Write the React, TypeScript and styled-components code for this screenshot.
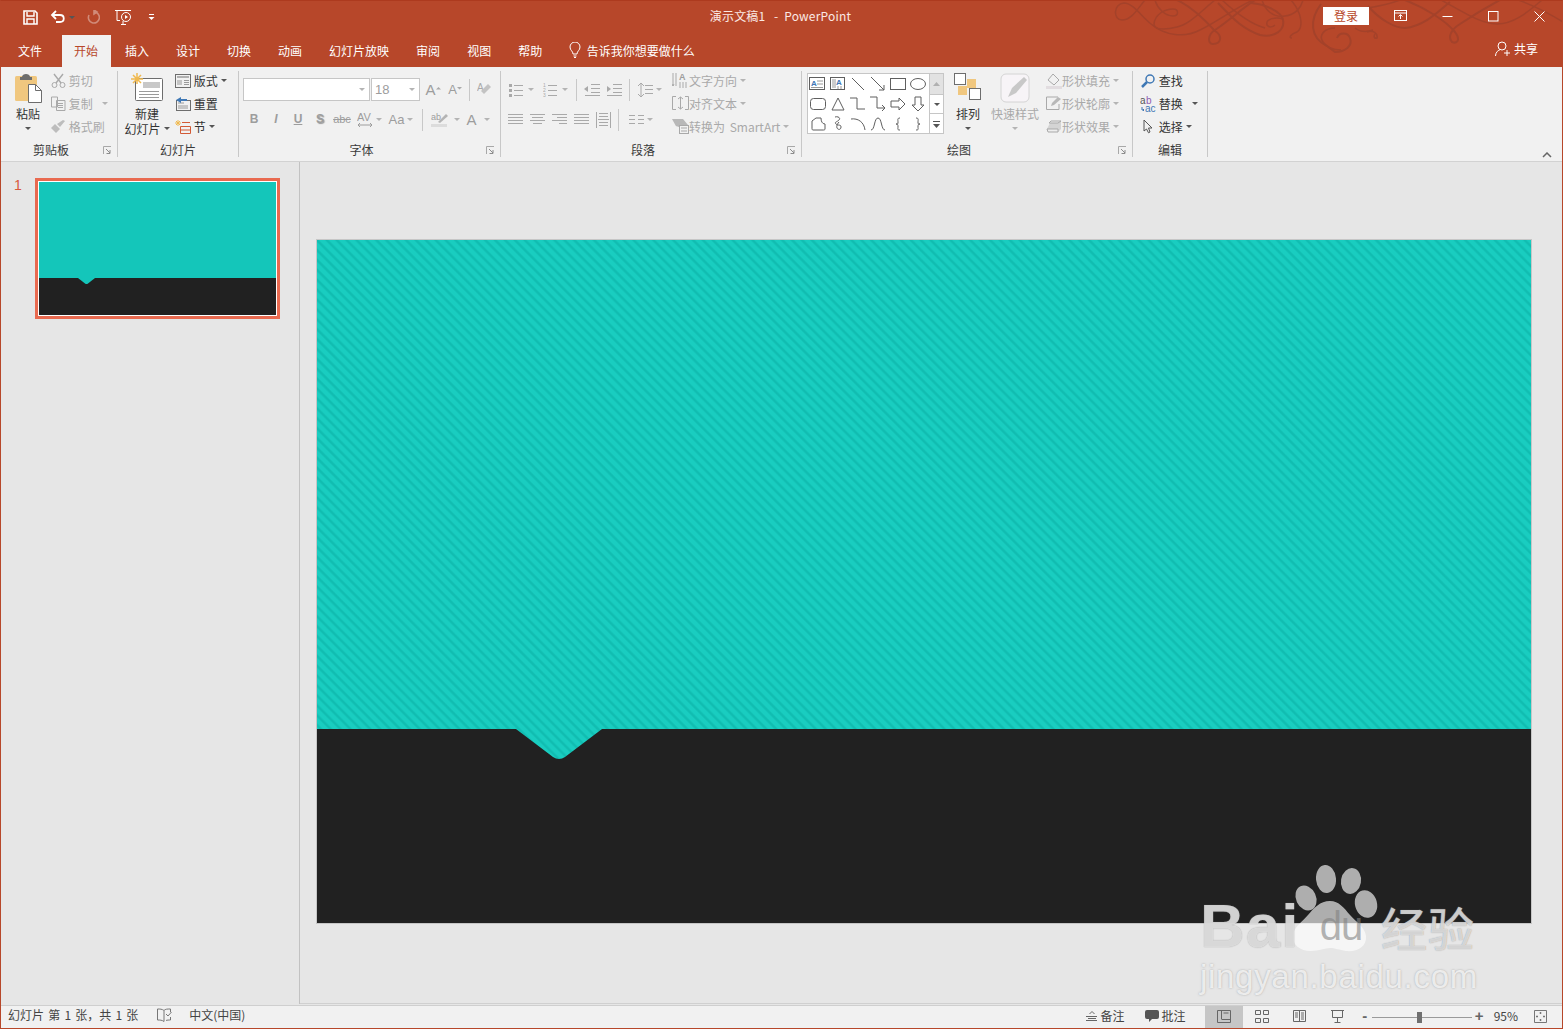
import React from 'react';
import styled, { createGlobalStyle } from 'styled-components';

const RUST = '#b7472a';
const OFF = '#a9a9a9';
const INK = '#5f5f5f';

const Global = createGlobalStyle`
  html, body { margin: 0; padding: 0; overflow: hidden; }
  body { font-family: "Noto Sans CJK SC", "Noto Sans", sans-serif; font-size: 12px; }
  * { box-sizing: border-box; }
`;

const Page = styled.div`
  position: relative;
  width: 1563px;
  height: 1029px;
  display: flex;
  flex-direction: column;
  border: 1px solid ${RUST};
  border-top-color: #ad3a1e;
  background: #e6e6e6;
  overflow: hidden;
`;

/* header */
const Header = styled.header`
  position: relative;
  flex: none;
  height: 66px;
  background: ${RUST};
  color: #fff;
`;
const Swirl = styled.svg`
  position: absolute;
  left: 1104px;
  top: -1px;
  pointer-events: none;
`;
const TitleBar = styled.div`
  position: relative;
  height: 34px;
  padding-bottom: 4px;
  display: grid;
  grid-template-columns: 1fr auto 1fr;
  align-items: center;
`;
const Qat = styled.div`
  display: flex;
  align-items: center;
  padding-left: 14px;
  margin-top: 2px;
`;
const QatCell = styled.div<{ $w: number }>`
  width: ${(p) => p.$w}px;
  display: flex;
  align-items: center;
  justify-content: center;
  gap: 3px;
`;
const Title = styled.div`
  font-size: 12px;
  letter-spacing: 0.2px;
  margin: 0 2px 2px 0;
  color: #fbe9e4;
`;
const WinControls = styled.div`
  display: flex;
  justify-content: flex-end;
  align-items: center;
`;
const Login = styled.div`
  width: 46px;
  height: 18px;
  margin-right: 9px;
  background: #fff;
  color: ${RUST};
  display: flex;
  align-items: center;
  justify-content: center;
  line-height: 18px;
`;
const WinBtn = styled.div`
  width: 46px;
  display: flex;
  justify-content: center;
`;
const Tabs = styled.nav`
  position: relative;
  height: 32px;
  display: flex;
  align-items: stretch;
  padding-left: 3.5px;
`;
const Tab = styled.div<{ $active?: boolean; $file?: boolean }>`
  padding: 0 ${(p) => (p.$active ? 12.5 : 13.5)}px 2px;
  margin: 0 ${(p) => (p.$file ? 5 : p.$active ? 1 : 0)}px 0 ${(p) => (p.$active ? 1 : 0)}px;
  display: flex;
  align-items: center;
  background: ${(p) => (p.$active ? '#f1f1f1' : 'transparent')};
  color: ${(p) => (p.$active ? RUST : '#fff')};
`;
const TellMe = styled.div`
  margin-left: 13px;
  padding-bottom: 2px;
  display: flex;
  align-items: center;
  gap: 6px;
  color: #fff;
`;
const Share = styled.div`
  margin-left: auto;
  margin-right: 24px;
  padding-bottom: 5px;
  display: flex;
  align-items: center;
  gap: 3px;
`;

/* ribbon */
const Ribbon = styled.section`
  flex: none;
  height: 95px;
  display: flex;
  align-items: flex-start;
  padding-top: 3px;
  background: #f1f1f1;
  border-bottom: 1px solid #d2d2d2;
  color: #333;
`;
const Group = styled.div<{ $w: number }>`
  width: ${(p) => p.$w}px;
  height: 88px;
  flex: none;
  display: flex;
  flex-direction: column;
`;
const GroupBody = styled.div<{ $pad?: number }>`
  height: 72px;
  display: flex;
  align-items: flex-start;
  padding-left: ${(p) => p.$pad ?? 0}px;
`;
const GroupFoot = styled.div`
  height: 16px;
  display: flex;
  align-items: center;
`;
const GroupLabel = styled.div`
  flex: 1;
  text-align: center;
  line-height: 16px;
  color: #3a3a3a;
`;
const LauncherSlot = styled.div`
  width: 16px;
  padding-right: 3px;
  display: flex;
  justify-content: center;
`;
const Divider = styled.div`
  width: 1px;
  height: 86px;
  flex: none;
  margin-top: 1px;
  background: #c8c8c8;
`;
const Collapse = styled.div`
  margin-left: auto;
  margin-right: 10px;
  align-self: flex-end;
  padding-bottom: 3px;
`;
const LargeBtn = styled.div<{ $w: number; $ml?: number; $off?: boolean }>`
  width: ${(p) => p.$w}px;
  margin-left: ${(p) => p.$ml ?? 0}px;
  flex: none;
  display: flex;
  flex-direction: column;
  align-items: center;
  padding-top: 3px;
  line-height: 15px;
  white-space: nowrap;
  color: ${(p) => (p.$off ? OFF : '#333')};
`;
const LargeIcon = styled.div`
  height: 32px;
  margin-bottom: 1px;
  display: flex;
  align-items: flex-start;
  justify-content: center;
`;
const LineWithCaret = styled.div`
  height: 15px;
  display: flex;
  align-items: center;
  justify-content: center;
`;
const Col = styled.div<{ $ml?: number }>`
  flex: none;
  margin: -1px 0 0 ${(p) => p.$ml ?? 0}px;
  display: flex;
  flex-direction: column;
`;
const SmallBtn = styled.div<{ $off?: boolean }>`
  height: 23px;
  display: flex;
  align-items: center;
  white-space: nowrap;
  color: ${(p) => (p.$off ? OFF : '#333')};
`;
const WideLabel = styled.span`
  word-spacing: 2px;
`;
const IconSlot = styled.div<{ $w: number }>`
  width: ${(p) => p.$w}px;
  flex: none;
  display: flex;
  justify-content: center;
  align-items: center;
`;
const Caret = styled.i<{ $ml?: number; $off?: boolean }>`
  display: block;
  flex: none;
  width: 0;
  height: 0;
  margin-left: ${(p) => p.$ml ?? 3}px;
  border-left: 3px solid transparent;
  border-right: 3px solid transparent;
  border-top: 3px solid ${(p) => (p.$off ? '#b4b4b4' : '#555')};
`;
const Rows = styled.div`
  flex: none;
  display: flex;
  flex-direction: column;
  gap: 7px;
  padding-top: 8px;
`;
const Row = styled.div`
  height: 23px;
  display: flex;
  align-items: center;
`;
const Cell = styled.div<{ $w: number; $ml?: number }>`
  width: ${(p) => p.$w}px;
  margin-left: ${(p) => p.$ml ?? 0}px;
  flex: none;
  height: 23px;
  display: flex;
  align-items: center;
  justify-content: center;
`;
const Combo = styled.div<{ $w: number }>`
  width: ${(p) => p.$w}px;
  height: 23px;
  flex: none;
  margin-right: 1px;
  padding: 0 4px 0 3px;
  display: flex;
  align-items: center;
  justify-content: space-between;
  background: #fff;
  border: 1px solid #c6c6c6;
  color: #a6a6a6;
`;
const FontGlyph = styled.span<{ $bold?: boolean; $italic?: boolean; $under?: boolean; $size?: number; $shadow?: boolean }>`
  font-family: "Liberation Sans", Arial, sans-serif;
  font-size: ${(p) => p.$size ?? 12}px;
  font-weight: ${(p) => (p.$bold ? 700 : 400)};
  font-style: ${(p) => (p.$italic ? 'italic' : 'normal')};
  text-decoration: ${(p) => (p.$under ? 'underline' : 'none')};
  text-shadow: ${(p) => (p.$shadow ? '1px 1px 1px #999' : 'none')};
  color: #9d9d9d;
  line-height: 1.2;
`;
const Strike = styled(FontGlyph)`
  text-decoration: line-through;
`;
const VRule = styled.div<{ $ml: number; $mr: number }>`
  width: 1px;
  height: 22px;
  flex: none;
  margin: 0 ${(p) => p.$mr}px 0 ${(p) => p.$ml}px;
  background: #c8c8c8;
`;
const Gallery = styled.div`
  width: 137px;
  height: 61px;
  flex: none;
  margin: 3px 0 0 5px;
  display: flex;
  background: #fff;
  border: 1px solid #c6c6c6;
`;
const GalleryGrid = styled.div`
  width: 121px;
  display: grid;
  grid-template-columns: repeat(6, 20px);
  grid-auto-rows: 20px;
  align-items: center;
  justify-items: center;
  align-content: center;
`;
const GalleryScroll = styled.div`
  flex: 1;
  display: flex;
  flex-direction: column;
  border-left: 1px solid #c6c6c6;
`;
const ScrollBtn = styled.div<{ $h: number; $dim?: boolean }>`
  height: ${(p) => p.$h}px;
  display: flex;
  align-items: center;
  justify-content: center;
  background: ${(p) => (p.$dim ? '#e2e2e2' : '#fff')};
  border-bottom: 1px solid #c6c6c6;
  &:last-child { border-bottom: 0; }
`;

/* workspace */
const Main = styled.main`
  flex: 1;
  min-height: 0;
  display: flex;
`;
const ThumbPane = styled.aside`
  width: 299px;
  flex: none;
  display: flex;
  align-items: flex-start;
  padding: 16px 0 0 13px;
  border-right: 1px solid #c2c2c2;
`;
const ThumbNo = styled.div`
  width: 21px;
  font-family: "Liberation Sans", Arial, sans-serif;
  font-size: 14px;
  line-height: 14px;
  color: #d9583a;
`;
const ThumbFrame = styled.div`
  width: 245px;
  height: 141px;
  border: 3px solid #e96a50;
  outline: 1px solid #fff;
  outline-offset: -4px;
  padding: 1px;
`;
const Workspace = styled.div`
  flex: 1;
  padding: 78px 0 0 17px;
  border-bottom: 1px solid #d0d0d0;
`;
const Slide = styled.div<{ $w: number; $h: number }>`
  width: ${(p) => p.$w}px;
  height: ${(p) => p.$h}px;
  background: #212121;
`;
const SlideFrame = styled(Slide)`
  box-shadow: 0 0 0 1px #c6c6c6;
`;
const Fill = styled.div<{ $h: number; $clip: string; $stripes?: boolean }>`
  height: ${(p) => p.$h}px;
  clip-path: path("${(p) => p.$clip}");
  background: ${(p) =>
    p.$stripes
      ? 'repeating-linear-gradient(45deg, #19cdc0 0, #19cdc0 3px, #11bdb1 4.5px, #11bdb1 5.5px, #19cdc0 7px)'
      : '#14c6ba'};
`;

/* status bar */
const Status = styled.footer`
  flex: none;
  height: 23px;
  margin-top: 1px;
  display: flex;
  align-items: center;
  background: #f1f1f1;
  border-top: 1px solid #cfcfcf;
  color: #444;
  line-height: 20px;
`;
const StatusLeft = styled.div`
  display: flex;
  align-items: center;
  padding: 0 0 2px 7px;
`;
const StatusRight = styled.div`
  margin-left: auto;
  display: flex;
  align-items: center;
  height: 100%;
`;
const StatusItem = styled.div<{ $ml?: number }>`
  margin-left: ${(p) => p.$ml ?? 0}px;
  padding-bottom: 2px;
  display: flex;
  align-items: center;
  gap: 3px;
  white-space: nowrap;
  word-spacing: 1.5px;
`;
const ViewBtn = styled.div<{ $active?: boolean; $w: number; $ml?: number }>`
  width: ${(p) => p.$w}px;
  margin-left: ${(p) => p.$ml ?? 0}px;
  height: 100%;
  padding-bottom: 1px;
  display: flex;
  align-items: center;
  justify-content: center;
  background: ${(p) => (p.$active ? '#c6c6c6' : 'transparent')};
`;
const ZoomTrack = styled.div`
  position: relative;
  width: 100px;
  height: 1px;
  margin: 0 3px;
  background: #9a9a9a;
`;
const ZoomThumb = styled.div`
  position: absolute;
  left: 45px;
  top: -5px;
  width: 5px;
  height: 11px;
  background: #707070;
`;
const ZoomSign = styled.div<{ $ml?: number }>`
  width: 8px;
  margin-left: ${(p) => p.$ml ?? 0}px;
  padding-bottom: 2px;
  font-family: "Liberation Sans", Arial, sans-serif;
  font-size: 15px;
  font-weight: 700;
  color: #666;
  text-align: center;
`;

/* watermark over the page */
const Watermark = styled.div`
  position: absolute;
  left: 1199px;
  top: 861px;
  width: 285px;
  height: 132px;
  padding-top: 36px;
  pointer-events: none;
`;
const Paw = styled.svg`
  position: absolute;
  left: 0;
  top: 0;
`;
const WmRow = styled.div`
  position: relative;
  display: flex;
  align-items: center;
  height: 56px;
`;
const WmBai = styled.div`
  width: 101px;
  font-family: "Liberation Sans", Arial, sans-serif;
  font-weight: 700;
  font-size: 62px;
  letter-spacing: 1px;
  line-height: 56px;
  color: rgba(255, 255, 255, 0.66);
  text-shadow: 0 0 1px rgba(130, 130, 130, 0.9);
`;
const WmDu = styled.div`
  width: 80px;
  text-align: center;
  font-family: "Liberation Sans", Arial, sans-serif;
  font-size: 40px;
  line-height: 52px;
  letter-spacing: -1px;
  color: rgba(130, 130, 130, 0.6);
`;
const WmCn = styled.div`
  font-weight: 500;
  font-size: 46px;
  letter-spacing: 1px;
  line-height: 56px;
  color: rgba(255, 255, 255, 0.64);
  text-shadow: 0 0 1px rgba(130, 130, 130, 0.9);
`;
const WmUrl = styled.div`
  margin-top: 6px;
  font-family: "Liberation Sans", Arial, sans-serif;
  font-size: 33px;
  letter-spacing: 0.7px;
  line-height: 34px;
  color: rgba(255, 255, 255, 0.75);
  text-shadow: 0 0 2px rgba(150, 150, 150, 0.8);
  white-space: nowrap;
`;

type IP = { w?: number; h?: number; children: React.ReactNode };
const Ico = ({ w = 16, h = 16, children }: IP) => (
  <svg width={w} height={h} viewBox={`0 0 ${w} ${h}`} fill="none" style={{ display: 'block', flex: 'none' }}>
    {children}
  </svg>
);
const Launcher = () => (
  <Ico w={9} h={9}>
    <path d="M.5 8V.5H8" stroke="#a8a8a8" />
    <path d="M3 3l4 4M7 4v3.5H3.5" stroke="#8c8c8c" />
  </Ico>
);
const Lines = ({ x, ys, w, c = OFF }: { x: number; ys: number[]; w: number; c?: string }) => (
  <>
    {ys.map((y) => (
      <path key={y} d={`M${x} ${y}.5h${w}`} stroke={c} />
    ))}
  </>
);

const tabs = ['插入', '设计', '切换', '动画', '幻灯片放映', '审阅', '视图', '帮助'];

const shapes: React.ReactNode[] = [
  <Ico w={18} h={14}><rect x=".5" y=".5" width="15" height="12" stroke={INK} /><text x="2" y="9" fontSize="8" fontWeight="700" fill="#3f78b5" fontFamily="Liberation Sans">A</text><path d="M8 4h6M8 7h6M2 10.5h12" stroke="#999" /></Ico>,
  <Ico w={16} h={14}><rect x=".5" y=".5" width="14" height="12" stroke={INK} /><text x="6" y="8" fontSize="8" fontWeight="700" fill="#3f78b5" fontFamily="Liberation Sans">A</text><path d="M3 2v9M5 2v9M8 9v3M11 9v3" stroke="#999" /></Ico>,
  <Ico w={14} h={14}><path d="M1 1l12 12" stroke={INK} /></Ico>,
  <Ico w={16} h={16}><path d="M1 1l13 13M14 9v5H9" stroke={INK} /></Ico>,
  <Ico w={16} h={12}><rect x=".5" y=".5" width="15" height="11" stroke={INK} /></Ico>,
  <Ico w={16} h={12}><ellipse cx="8" cy="6" rx="7.5" ry="5.5" stroke={INK} /></Ico>,
  <Ico w={16} h={12}><rect x=".5" y=".5" width="15" height="11" rx="3" stroke={INK} /></Ico>,
  <Ico w={14} h={14}><path d="M7 1l6 12H1z" stroke={INK} /></Ico>,
  <Ico w={16} h={13}><path d="M0 1h7v11h8" stroke={INK} /></Ico>,
  <Ico w={16} h={15}><path d="M0 1h7v11h8M12 9l3 3-3 3" stroke={INK} /></Ico>,
  <Ico w={16} h={14}><path d="M1 4h8V1l6 6-6 6v-3H1z" stroke={INK} /></Ico>,
  <Ico w={14} h={16}><path d="M4 1h6v8h3l-6 6-6-6h3z" stroke={INK} /></Ico>,
  <Ico w={15} h={14}><path d="M1 4l4-3h5c0 3 1 6 4 6v5c0 1-1 1-2 1H2C1 13 1 12 1 11z" stroke={INK} /></Ico>,
  <Ico w={10} h={15}><path d="M2 1c3-1 6 1 4 3S1 6 3 8s5 0 5 3-3 3-4 1 1-5 2-6" stroke={INK} /></Ico>,
  <Ico w={16} h={14}><path d="M1 2c7-1 13 3 14 11" stroke={INK} /></Ico>,
  <Ico w={16} h={14}><path d="M1 13c4 0 3-12 7-12s3 12 7 12" stroke={INK} /></Ico>,
  <Ico w={8} h={14}><path d="M6 1C3 1 4 3 4 5S4 7 2 7c2 0 2 1 2 3s-1 3 2 3" stroke={INK} /></Ico>,
  <Ico w={8} h={14}><path d="M2 1c3 0 2 2 2 4s0 2 2 2c-2 0-2 1-2 3s1 3-2 3" stroke={INK} /></Ico>,
];

const tealTop = 'M0 0H1214V489H285L248 517Q242 521 236 517L199 489H0Z';
const tealThumb = 'M0 0H237V96H56L49 101.5Q47.5 102.5 46 101.5L39 96H0Z';

export default function App() {
  return (
    <Page>
      <Global />
      <Header>
        <Swirl width="458" height="67" viewBox="0 0 458 67" fill="none" stroke="#a4422a" strokeWidth="1.5">
          <path d="M40 0C33 8 27 20 17 20 8 20 8 4 19 3 28 3 36 16 46 24 60 36 80 38 95 30 112 22 130 8 148 0" />
          <path d="M50 0c2 8 10 16 18 16 6 0 6-7 0-7C60 9 50 14 49 24c0 6 11 6 23 3C85 24 95 12 110 0" />
          <path strokeWidth="2" d="M72 0c13 6 28 20 38 31 8 5 6 13-2 13-6 0-5-10 2-14C125 20 135 10 150 0" />
          <path strokeWidth="2" d="M113 3c12 12 22 25 42 32 15 3 25-5 23-15-1-8-18-16-32-17" />
          <path d="M178 19c-6-2-18-1-16 6 2 3 6 2 8 0M117 0c13 12 28 24 43 28" />
          <path d="M157 0c3 10 11 18 23 16 10-1 16-8 18-16M186 0c12 14 12 28 6 32-6 2-9 6-5 6" />
          <path strokeWidth="2" d="M216 4c-12 16-11 34 6 42l8 6c10 0 18-6 15-14-2-6-11-6-13 0" />
          <path d="M230 28c-10 0-17 7-12 14 4 6 12 8 18 8" />
          <path strokeWidth="2" d="M263 6c12 14 27 22 37 22 20-2 35-18 45-26" />
          <path strokeWidth="2" d="M300 0c20 8 40 20 50 32 6 8 2 12-3 10-4-4-2-12 8-18 15-10 25-16 40-24" />
          <path d="M336 0c19 10 39 24 56 24 18 0 33-14 45-24M262 32c6-2 11 1 10 6-2 1-4-1-2-4M250 28c5 4 12 4 18 2M263 8c12-2 27-6 32-8M413 0c17 6 32 14 45 22" />
        </Swirl>
        <TitleBar>
          <Qat>
            <QatCell $w={30}>
              <Ico w={15} h={15}>
                <path d="M1 1h11l2 2v11H1z" stroke="#fff" strokeWidth="1.6" />
                <path d="M4 2v4h7V2M4 14V9h7v5" stroke="#fff" strokeWidth="1.4" />
              </Ico>
            </QatCell>
            <QatCell $w={34}>
              <Ico w={16} h={14}>
                <path d="M6 1L2 5l4 4M2 5h8c5 0 5 7 0 7H6" stroke="#fff" strokeWidth="1.8" />
              </Ico>
              <Caret $ml={0} />
            </QatCell>
            <QatCell $w={28}>
              <Ico w={14} h={14}>
                <path d="M8 2a5.5 5.5 0 1 1-5 3M8 0v4l3-2z" stroke="#d18b79" strokeWidth="1.6" />
              </Ico>
            </QatCell>
            <QatCell $w={32}>
              <Ico w={17} h={17}>
                <path d="M0 1.5h16M2 1.5v10h3M6 15.5h5M8 12v3" stroke="#fff" />
                <circle cx="11" cy="8" r="4.5" stroke="#fff" />
                <path d="M10 6l3 2-3 2z" fill="#fff" />
              </Ico>
            </QatCell>
            <QatCell $w={24}>
              <Ico w={7} h={8}>
                <path d="M1 1.5h5" stroke="#fff" />
                <path d="M.5 4h6L3.5 7z" fill="#fff" />
              </Ico>
            </QatCell>
          </Qat>
          <Title>演示文稿1&nbsp;&nbsp; -&nbsp; PowerPoint</Title>
          <WinControls>
            <Login>登录</Login>
            <WinBtn>
              <Ico w={14} h={12}>
                <rect x=".5" y=".5" width="12" height="10" stroke="#fff" />
                <path d="M1 3h11M6.5 9V5M4.5 6.5l2-2 2 2" stroke="#fff" />
              </Ico>
            </WinBtn>
            <WinBtn>
              <Ico w={11} h={3}>
                <path d="M.5 1.5h10" stroke="#fff" />
              </Ico>
            </WinBtn>
            <WinBtn>
              <Ico w={11} h={11}>
                <rect x=".5" y=".5" width="9.5" height="9.5" stroke="#fff" />
              </Ico>
            </WinBtn>
            <WinBtn>
              <Ico w={11} h={11}>
                <path d="M.5.5l10 10M10.5.5l-10 10" stroke="#fff" />
              </Ico>
            </WinBtn>
          </WinControls>
        </TitleBar>
        <Tabs>
          <Tab $file>文件</Tab>
          <Tab $active>开始</Tab>
          {tabs.map((t) => (
            <Tab key={t}>{t}</Tab>
          ))}
          <TellMe>
            <Ico w={12} h={16}>
              <path d="M4 12c0-3-3-3.500-3-7a5 5 0 0 1 10 0c0 3.500-3 4-3 7zM4.500 14h3M5 15.500h2" stroke="#fff" />
            </Ico>
            告诉我你想要做什么
          </TellMe>
          <Share>
            <Ico w={16} h={16}>
              <circle cx="7" cy="5" r="4" stroke="#fff" />
              <path d="M.5 15c0-4 3-6 5-6.500M12 9v6M9 12h6" stroke="#fff" />
            </Ico>
            共享
          </Share>
        </Tabs>
      </Header>

      <Ribbon>
        <Group $w={116}>
          <GroupBody $pad={12}>
            <LargeBtn $w={30}>
              <LargeIcon>
                <Ico w={30} h={32}>
                  <rect x="2" y="3" width="22" height="25" rx="1.500" fill="#f0c77f" />
                  <path d="M9 4c0-4 8-4 8 0h2v3H7V4z" fill="#6d6d6d" />
                  <path d="M15.500 11.500h7l6 6v12h-13z" fill="#fff" stroke="#6d6d6d" />
                  <path d="M22.500 11.500v6h6" stroke="#6d6d6d" />
                </Ico>
              </LargeIcon>
              <span>粘贴</span>
              <LineWithCaret>
                <Caret $ml={0} />
              </LineWithCaret>
            </LargeBtn>
            <Col $ml={7}>
              <SmallBtn $off>
                <IconSlot $w={16}>
                  <Ico w={15} h={15}>
                    <path d="M3 1l7 9M12 1L5 10" stroke={OFF} strokeWidth="1.400" />
                    <circle cx="3.500" cy="12" r="2.500" stroke={OFF} />
                    <circle cx="11.500" cy="12" r="2.500" stroke={OFF} />
                  </Ico>
                </IconSlot>
                <span>&nbsp;剪切</span>
              </SmallBtn>
              <SmallBtn $off>
                <IconSlot $w={16}>
                  <Ico w={15} h={15}>
                    <path d="M.5 1h6v10h-6zM5.500 4.500h8.500v10H5.500z" stroke={OFF} fill="#f1f1f1" />
                    <Lines x={7} ys={[7, 9, 11]} w={5} />
                  </Ico>
                </IconSlot>
                <span>&nbsp;复制</span>
                <Caret $ml={9} $off />
              </SmallBtn>
              <SmallBtn $off>
                <IconSlot $w={16}>
                  <Ico w={15} h={13}>
                    <path d="M0 8l5 5 4-4-5-5z" fill="#bdbdbd" />
                    <path d="M6 4l3 3 5-6-2-1z" fill="#bdbdbd" />
                  </Ico>
                </IconSlot>
                <span>&nbsp;格式刷</span>
              </SmallBtn>
            </Col>
          </GroupBody>
          <GroupFoot>
            <GroupLabel>剪贴板</GroupLabel>
            <LauncherSlot>
              <Launcher />
            </LauncherSlot>
          </GroupFoot>
        </Group>
        <Divider />

        <Group $w={120}>
          <GroupBody $pad={6}>
            <LargeBtn $w={46}>
              <LargeIcon>
                <Ico w={32} h={30}>
                  <rect x="4.500" y="5.500" width="27" height="22" rx="1" fill="#fff" stroke="#6d6d6d" />
                  <rect x="12" y="9" width="17" height="6" fill="#c8c8c8" />
                  <Lines x={8} ys={[18, 21, 24]} w={20} c="#9a9a9a" />
                  <path d="M6 0v11M0 6h12M2 2l8 8M10 2l-8 8" stroke="#f0b94f" strokeWidth="1.500" />
                </Ico>
              </LargeIcon>
              <span>新建</span>
              <LineWithCaret>
                幻灯片
                <Caret $ml={3} />
              </LineWithCaret>
            </LargeBtn>
            <Col $ml={5}>
              <SmallBtn>
                <IconSlot $w={16}>
                  <Ico w={16} h={14}>
                    <rect x=".5" y=".5" width="15" height="13" stroke="#6d6d6d" />
                    <path d="M2 3h12" stroke="#b0b0b0" strokeWidth="2" />
                    <path d="M2 6h5v5H2z" fill="#c4c4c4" />
                    <Lines x={9} ys={[6, 8, 10]} w={5} c="#9a9a9a" />
                  </Ico>
                </IconSlot>
                <span>&nbsp;版式</span>
                <Caret />
              </SmallBtn>
              <SmallBtn>
                <IconSlot $w={16}>
                  <Ico w={16} h={14}>
                    <rect x="1.500" y="3.500" width="14" height="10" stroke="#6d6d6d" />
                    <path d="M3 6h6M3 9h10M3 11h10" stroke="#9a9a9a" />
                    <path d="M6 0L1 3l5 3V4h6V2H6z" fill="#3f78b5" />
                  </Ico>
                </IconSlot>
                <span>&nbsp;重置</span>
              </SmallBtn>
              <SmallBtn>
                <IconSlot $w={16}>
                  <Ico w={16} h={14}>
                    <path d="M3 0v6M0 3h6M1 1l4 4M5 1L1 5" stroke="#f0b94f" />
                    <path d="M7 2.500h8M5.500 6.500h10v7h-10zM5.500 10h10" stroke="#d35a35" />
                  </Ico>
                </IconSlot>
                <span>&nbsp;节</span>
                <Caret />
              </SmallBtn>
            </Col>
          </GroupBody>
          <GroupFoot>
            <GroupLabel>幻灯片</GroupLabel>
          </GroupFoot>
        </Group>
        <Divider />

        <Group $w={261}>
          <GroupBody $pad={4}>
            <Rows>
              <Row>
                <Combo $w={127}>
                  <span />
                  <Caret $ml={0} $off />
                </Combo>
                <Combo $w={49}>
                  <FontGlyph $size={13}>18</FontGlyph>
                  <Caret $ml={0} $off />
                </Combo>
                <Cell $w={24}>
                  <FontGlyph $size={15}>A</FontGlyph>
                  <Ico w={5} h={8}>
                    <path d="M0 3.500h5L2.500 1z" fill={OFF} />
                  </Ico>
                </Cell>
                <Cell $w={20}>
                  <FontGlyph $size={13}>A</FontGlyph>
                  <Ico w={5} h={8}>
                    <path d="M0 1h5L2.500 3.500z" fill={OFF} />
                  </Ico>
                </Cell>
                <VRule $ml={4} $mr={5} />
                <Cell $w={20}>
                  <Ico w={16} h={15}>
                    <text x="0" y="9" fontSize="10" fill={OFF} fontFamily="Liberation Sans">A</text>
                    <path d="M7 12l7-7-3-3-7 7z" fill="#c3c3c3" />
                  </Ico>
                </Cell>
              </Row>
              <Row>
                <Cell $w={22}>
                  <FontGlyph $bold>B</FontGlyph>
                </Cell>
                <Cell $w={22}>
                  <FontGlyph $italic $bold>
                    I
                  </FontGlyph>
                </Cell>
                <Cell $w={22}>
                  <FontGlyph $under $bold>
                    U
                  </FontGlyph>
                </Cell>
                <Cell $w={22}>
                  <FontGlyph $bold $shadow>
                    S
                  </FontGlyph>
                </Cell>
                <Cell $w={22}>
                  <Strike $size={11}>abc</Strike>
                </Cell>
                <Cell $w={32}>
                  <Ico w={16} h={16}>
                    <text x="0" y="9" fontSize="11" fill="#9d9d9d" fontFamily="Liberation Sans">AV</text>
                    <path d="M1 13h14M3 11l-2 2 2 2M13 11l2 2-2 2" stroke="#9d9d9d" />
                  </Ico>
                  <Caret $off />
                </Cell>
                <Cell $w={32}>
                  <FontGlyph $size={13}>Aa</FontGlyph>
                  <Caret $off />
                </Cell>
                <VRule $ml={5} $mr={5} />
                <Cell $w={34}>
                  <Ico w={18} h={16}>
                    <text x="0" y="8" fontSize="9" fill="#9d9d9d" fontFamily="Liberation Sans">ab</text>
                    <path d="M7 10l8-8 2 2-8 7z" fill="#b4b4b4" />
                    <path d="M0 13.500h16" stroke="#dcdcdc" strokeWidth="3" />
                  </Ico>
                  <Caret $ml={5} $off />
                </Cell>
                <Cell $w={32}>
                  <FontGlyph $size={15}>A</FontGlyph>
                  <Caret $ml={7} $off />
                </Cell>
              </Row>
            </Rows>
          </GroupBody>
          <GroupFoot>
            <GroupLabel>字体</GroupLabel>
            <LauncherSlot>
              <Launcher />
            </LauncherSlot>
          </GroupFoot>
        </Group>
        <Divider />

        <Group $w={300}>
          <GroupBody $pad={3}>
            <Rows>
              <Row>
                <Cell $w={34}>
                  <Ico w={14} h={14}>
                    <path d="M5 2.500h9M5 7.500h9M5 12.500h9" stroke={OFF} />
                    <path d="M0 1h3v3H0zM0 6h3v3H0zM0 11h3v3H0z" fill={OFF} />
                  </Ico>
                  <Caret $ml={5} $off />
                </Cell>
                <Cell $w={34}>
                  <Ico w={14} h={16}>
                    <path d="M5 3.500h9M5 8.500h9M5 13.500h9" stroke={OFF} />
                    <text x="0" y="5" fontSize="5" fill={OFF} fontFamily="Liberation Sans">1</text>
                    <text x="0" y="10" fontSize="5" fill={OFF} fontFamily="Liberation Sans">2</text>
                    <text x="0" y="15" fontSize="5" fill={OFF} fontFamily="Liberation Sans">3</text>
                  </Ico>
                  <Caret $ml={5} $off />
                </Cell>
                <VRule $ml={4} $mr={4} />
                <Cell $w={22}>
                  <Ico w={16} h={12}>
                    <path d="M7 .5h9M7 4.500h9M7 8.500h9M1 11.500h15" stroke={OFF} />
                    <path d="M0 5l4-3v6z" fill={OFF} />
                  </Ico>
                </Cell>
                <Cell $w={22}>
                  <Ico w={16} h={12}>
                    <path d="M7 .5h9M7 4.500h9M7 8.500h9M1 11.500h15" stroke={OFF} />
                    <path d="M5 5L1 2v6z" fill={OFF} />
                  </Ico>
                </Cell>
                <VRule $ml={4} $mr={4} />
                <Cell $w={32}>
                  <Ico w={15} h={16}>
                    <path d="M3 1v14M0 4l3-3 3 3M0 12l3 3 3-3M7 3.500h8M7 7.500h8M7 11.500h8" stroke={OFF} />
                  </Ico>
                  <Caret $ml={3} $off />
                </Cell>
              </Row>
              <Row>
                <Cell $w={22}>
                  <Ico w={15} h={11}>
                    <Lines x={0} ys={[0, 3, 6, 9]} w={15} />
                  </Ico>
                </Cell>
                <Cell $w={22}>
                  <Ico w={15} h={11}>
                    <path d="M0 .5h15M2 3.500h11M0 6.500h15M3 9.500h9" stroke={OFF} />
                  </Ico>
                </Cell>
                <Cell $w={22}>
                  <Ico w={15} h={11}>
                    <path d="M0 .5h15M5 3.500h10M0 6.500h15M7 9.500h8" stroke={OFF} />
                  </Ico>
                </Cell>
                <Cell $w={22}>
                  <Ico w={15} h={11}>
                    <Lines x={0} ys={[0, 3, 6, 9]} w={15} />
                  </Ico>
                </Cell>
                <Cell $w={22}>
                  <Ico w={15} h={16}>
                    <path d="M.5 0v16M14.500 0v16M3 1.500h9M3 4.500h9M3 10.500h9M3 13.500h9M2 7.500h11" stroke={OFF} />
                  </Ico>
                </Cell>
                <VRule $ml={4} $mr={4} />
                <Cell $w={36}>
                  <Ico w={15} h={11}>
                    <path d="M0 1.500h6M9 1.500h6M0 5.500h6M9 5.500h6M0 9.500h6M9 9.500h6" stroke={OFF} />
                  </Ico>
                  <Caret $ml={3} $off />
                </Cell>
              </Row>
            </Rows>
            <Col $ml={5}>
              <SmallBtn $off>
                <IconSlot $w={18}>
                  <Ico w={17} h={17}>
                    <path d="M1 1v13M4 1v13M0 12l1 2 1-2" stroke={OFF} />
                    <text x="7" y="8" fontSize="9" fontWeight="700" fill="#9d9d9d" fontFamily="Liberation Sans">A</text>
                    <path d="M8 10v6M11 10v6M14 10v6" stroke={OFF} />
                  </Ico>
                </IconSlot>
                <span>文字方向</span>
                <Caret $off />
              </SmallBtn>
              <SmallBtn $off>
                <IconSlot $w={18}>
                  <Ico w={17} h={15}>
                    <path d="M4 .5H.5v13H4M13 .5h3.500v13H13M8.500 1v12M6 3l2.500-2L11 3M6 11l2.500 2 2.500-2" stroke={OFF} />
                  </Ico>
                </IconSlot>
                <span>对齐文本</span>
                <Caret $off />
              </SmallBtn>
              <SmallBtn $off>
                <IconSlot $w={18}>
                  <Ico w={17} h={15}>
                    <path d="M0 0h11l5 6H8l2 3-6-2 1 2z" fill="#b8b8b8" />
                    <rect x="7.500" y="6.500" width="9" height="8" fill="#f1f1f1" stroke={OFF} />
                    <path d="M9 9h6M9 12h6" stroke={OFF} />
                  </Ico>
                </IconSlot>
                <WideLabel>转换为 SmartArt</WideLabel>
                <Caret $off />
              </SmallBtn>
            </Col>
          </GroupBody>
          <GroupFoot>
            <GroupLabel>段落</GroupLabel>
            <LauncherSlot>
              <Launcher />
            </LauncherSlot>
          </GroupFoot>
        </Group>
        <Divider />

        <Group $w={330}>
          <GroupBody>
            <Gallery>
              <GalleryGrid>
                {shapes.map((s, i) => (
                  <div key={i}>{s}</div>
                ))}
              </GalleryGrid>
              <GalleryScroll>
                <ScrollBtn $h={21} $dim>
                  <Ico w={7} h={4}>
                    <path d="M0 4h7L3.500 0z" fill="#b0b0b0" />
                  </Ico>
                </ScrollBtn>
                <ScrollBtn $h={19}>
                  <Caret $ml={0} />
                </ScrollBtn>
                <ScrollBtn $h={19}>
                  <Ico w={7} h={8}>
                    <path d="M0 1.500h7" stroke="#555" />
                    <path d="M0 4h7L3.500 8z" fill="#555" />
                  </Ico>
                </ScrollBtn>
              </GalleryScroll>
            </Gallery>
            <LargeBtn $w={30} $ml={9}>
              <LargeIcon>
                <Ico w={28} h={28}>
                  <rect x="13" y="6" width="9" height="9" fill="#f0c77f" />
                  <rect x="4" y="13" width="9" height="9" fill="#f0c77f" />
                  <rect x=".5" y=".5" width="11" height="11" fill="#fff" stroke="#6d6d6d" />
                  <rect x="15.500" y="15.500" width="11" height="11" fill="#fff" stroke="#6d6d6d" />
                </Ico>
              </LargeIcon>
              <span>排列</span>
              <LineWithCaret>
                <Caret $ml={0} />
              </LineWithCaret>
            </LargeBtn>
            <LargeBtn $w={48} $ml={8} $off>
              <LargeIcon>
                <Ico w={30} h={30}>
                  <rect x="1" y="1" width="28" height="28" rx="5" fill="#f7f4f7" stroke="#d4d4d4" />
                  <path d="M8 24l4-9 12-11 3 3-11 13z" fill="#c8c8c8" />
                </Ico>
              </LargeIcon>
              <span>快速样式</span>
              <LineWithCaret>
                <Caret $ml={0} $off />
              </LineWithCaret>
            </LargeBtn>
            <Col $ml={6}>
              <SmallBtn $off>
                <IconSlot $w={17}>
                  <Ico w={16} h={16}>
                    <path d="M7 1l6 6-5 5-6-5z" stroke={OFF} fill="#f1f1f1" />
                    <path d="M0 13h16v3H0z" fill="#e2dde0" />
                  </Ico>
                </IconSlot>
                <span>形状填充</span>
                <Caret $off />
              </SmallBtn>
              <SmallBtn $off>
                <IconSlot $w={17}>
                  <Ico w={16} h={15}>
                    <path d="M12 1H.5v12.500H13V8" stroke={OFF} />
                    <path d="M5 10l1-3 6-6 3 2-7 6z" fill="#b8b8b8" />
                  </Ico>
                </IconSlot>
                <span>形状轮廓</span>
                <Caret $off />
              </SmallBtn>
              <SmallBtn $off>
                <IconSlot $w={17}>
                  <Ico w={16} h={14}>
                    <path d="M1 9l4-8h10v8l-3 3H4z" fill="#d4d4d4" />
                    <path d="M3 3h9l3-2H5zM1 9h11v3H2z" fill="#eee" stroke={OFF} />
                  </Ico>
                </IconSlot>
                <span>形状效果</span>
                <Caret $off />
              </SmallBtn>
            </Col>
          </GroupBody>
          <GroupFoot>
            <GroupLabel>绘图</GroupLabel>
            <LauncherSlot>
              <Launcher />
            </LauncherSlot>
          </GroupFoot>
        </Group>
        <Divider />

        <Group $w={74}>
          <GroupBody $pad={6}>
            <Col>
              <SmallBtn>
                <IconSlot $w={17}>
                  <Ico w={14} h={14}>
                    <circle cx="9" cy="5" r="4" stroke="#3f78b5" strokeWidth="1.500" />
                    <path d="M6 8l-5 5" stroke="#3f78b5" strokeWidth="2.500" />
                  </Ico>
                </IconSlot>
                <span>&nbsp;查找</span>
              </SmallBtn>
              <SmallBtn>
                <IconSlot $w={17}>
                  <Ico w={16} h={18}>
                    <text x="0" y="9" fontSize="10" fill="#555" fontFamily="Liberation Sans">a</text>
                    <text x="6" y="9" fontSize="10" fill="#8e5bb0" fontFamily="Liberation Sans">b</text>
                    <text x="5" y="17" fontSize="10" fill="#3f78b5" fontFamily="Liberation Sans">ac</text>
                    <path d="M2 12v3h2M3 14l1 1-1 1" stroke="#3f78b5" />
                  </Ico>
                </IconSlot>
                <span>&nbsp;替换</span>
                <Caret $ml={9} />
              </SmallBtn>
              <SmallBtn>
                <IconSlot $w={17}>
                  <Ico w={10} h={15}>
                    <path d="M1 1l8 8H5.500L7 13l-1.500.8L3.500 10 1 12z" stroke="#555" />
                  </Ico>
                </IconSlot>
                <span>&nbsp;选择</span>
                <Caret />
              </SmallBtn>
            </Col>
          </GroupBody>
          <GroupFoot>
            <GroupLabel>编辑</GroupLabel>
          </GroupFoot>
        </Group>
        <Divider />
        <Collapse>
          <Ico w={10} h={6}>
            <path d="M1 5l4-4 4 4" stroke="#666" strokeWidth="1.500" />
          </Ico>
        </Collapse>
      </Ribbon>

      <Main>
        <ThumbPane>
          <ThumbNo>1</ThumbNo>
          <ThumbFrame>
            <Slide $w={237} $h={133}>
              <Fill $h={103} $clip={tealThumb} />
            </Slide>
          </ThumbFrame>
        </ThumbPane>
        <Workspace>
          <SlideFrame $w={1214} $h={683}>
            <Fill $h={522} $clip={tealTop} $stripes />
          </SlideFrame>
        </Workspace>
      </Main>

      <Status>
        <StatusLeft>
          <StatusItem>幻灯片 第 1 张，共 1 张</StatusItem>
          <StatusItem $ml={19}>
            <Ico w={15} h={14}>
              <path d="M7 2.500C5 1 3 1 .5 1v11c2.500 0 4.500 0 6.500 1.500M7 2.500C8.500 1 10 1 13.500 1v3M7 3v10.500M9 12.500c1-.5 3-.5 4.500-.5V9" stroke="#777" />
              <path d="M9 6l2 2 3.500-4" stroke="#777" />
            </Ico>
          </StatusItem>
          <StatusItem $ml={17}>中文(中国)</StatusItem>
        </StatusLeft>
        <StatusRight>
          <StatusItem>
            <Ico w={12} h={12}>
              <path d="M3.500 4L6 1.500 8.500 4M0 6.500h11M2 8.500h8M0 10.500h11" stroke="#666" />
            </Ico>
            备注
          </StatusItem>
          <StatusItem $ml={20}>
            <Ico w={14} h={14}>
              <path d="M2 1h10a2 2 0 0 1 2 2v5a2 2 0 0 1-2 2H7l-3 3v-3H2a2 2 0 0 1-2-2V3a2 2 0 0 1 2-2z" fill="#555" />
            </Ico>
            批注
          </StatusItem>
          <ViewBtn $active $w={38} $ml={19}>
            <Ico w={14} h={13}>
              <path d="M.5.5h13v12H.5zM4.500 1v8M4.500 9.500h9M6.500 3h5" stroke="#666" />
            </Ico>
          </ViewBtn>
          <ViewBtn $w={38}>
            <Ico w={14} h={13}>
              <path d="M.5.5h5v4h-5zM8.500.5h5v4h-5zM.5 8.500h5v4h-5zM8.500 8.500h5v4h-5z" stroke="#666" />
            </Ico>
          </ViewBtn>
          <ViewBtn $w={38}>
            <Ico w={13} h={13}>
              <path d="M.5.5h12v11H.5zM6.500 1v10M2 3h3M2 5h3M2 7h3M8 3h3M8 5h3M8 7h3M8 9h3" stroke="#666" />
            </Ico>
          </ViewBtn>
          <ViewBtn $w={38}>
            <Ico w={13} h={13}>
              <path d="M0 .5h13M1.500 1v6.500h10V1M6.500 8v4M3.500 12.500h6" stroke="#666" />
            </Ico>
          </ViewBtn>
          <ZoomSign $ml={4}>-</ZoomSign>
          <ZoomTrack>
            <ZoomThumb />
          </ZoomTrack>
          <ZoomSign>+</ZoomSign>
          <StatusItem $ml={11}>95%</StatusItem>
          <ViewBtn $w={44}>
            <Ico w={13} h={13}>
              <path d="M.5.5h12v12H.5zM6.500 2v2M5.500 3h2M6.500 9v2M5.500 10h2M2 6.500h2M3 5.500v2M9 6.500h2M10 5.500v2" stroke="#777" />
            </Ico>
          </ViewBtn>
        </StatusRight>
      </Status>

      <Watermark>
        <Paw width="285" height="132" viewBox="0 0 285 132" fill="rgba(255,255,255,0.64)">
          <ellipse cx="126" cy="17" rx="10" ry="14" transform="rotate(-5 126 17)" />
          <ellipse cx="151" cy="19" rx="10" ry="13" transform="rotate(10 151 19)" />
          <ellipse cx="106" cy="36" rx="10" ry="13" transform="rotate(-25 106 36)" />
          <ellipse cx="166" cy="42" rx="11" ry="14" transform="rotate(-15 166 42)" />
          <path d="M130 39c9 0 14 7 20 14s15 12 16 21c1 11-9 16-20 15-7-1-11-3-16-3s-11 3-19 3c-11 0-19-6-18-16 1-8 9-13 15-20s12-14 22-14z" />
        </Paw>
        <WmRow>
          <WmBai>Bai</WmBai>
          <WmDu>du</WmDu>
          <WmCn>经验</WmCn>
        </WmRow>
        <WmUrl>jingyan.baidu.com</WmUrl>
      </Watermark>
    </Page>
  );
}
